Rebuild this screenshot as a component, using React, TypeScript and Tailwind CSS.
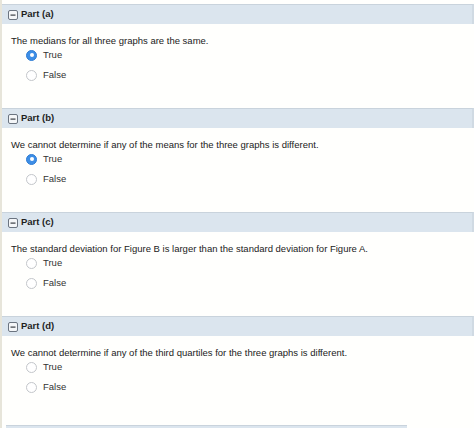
import React from 'react';

// Quiz parts, each with a true/false choice
const parts = [
  { label: 'Part (a)', question: 'The medians for all three graphs are the same.', answer: 'True' },
  { label: 'Part (b)', question: 'We cannot determine if any of the means for the three graphs is different.', answer: 'True' },
  { label: 'Part (c)', question: 'The standard deviation for Figure B is larger than the standard deviation for Figure A.', answer: '' },
  { label: 'Part (d)', question: 'We cannot determine if any of the third quartiles for the three graphs is different.', answer: '' },
];

const CollapseIcon = () => (
  <svg width="10" height="10" viewBox="0 0 10 10" className="shrink-0">
    <rect x="0.5" y="0.5" width="9" height="9" rx="1.5" fill="#f4f6f8" stroke="#6b7480" />
    <rect x="2.5" y="4.5" width="5" height="1.2" fill="#3a3f45" />
  </svg>
);

const Radio = ({ checked }: { checked: boolean }) =>
  checked ? (
    <span className="w-[11px] h-[11px] rounded-full bg-[#3d8ee6] border border-[#2f7dd4] flex items-center justify-center shrink-0">
      <span className="w-[4px] h-[4px] rounded-full bg-white" />
    </span>
  ) : (
    <span className="w-[11px] h-[11px] rounded-full bg-white border border-[#c3c6ca] shrink-0" />
  );

const Part = ({ label, question, answer }: { label: string; question: string; answer: string }) => (
  <section className="h-[104px] shrink-0 flex flex-col">
    <div className="h-[20px] shrink-0 flex items-center gap-[3px] pl-[6px] bg-[#dbe5ee] border-t border-[#c9d3dc] border-r-2 border-r-[#d0dae3]">
      <CollapseIcon />
      <span className="font-bold text-[9.5px] text-[#1e1e1e]">{label}</span>
    </div>
    <div className="flex flex-col pt-[10px] pl-[9px]">
      <p className="h-[13px] leading-[14px] text-[9.5px] text-[#222]">{question}</p>
      <div className="flex flex-col gap-[4px] pl-[15px]">
        {['True', 'False'].map((opt) => (
          <label key={opt} className="h-[16px] flex items-center gap-[6px] text-[9.5px] text-[#333]">
            <Radio checked={answer === opt} />
            {opt}
          </label>
        ))}
      </div>
    </div>
  </section>
);

export default function App() {
  return (
    <div className="w-[474px] h-[428px] overflow-hidden bg-[#fffffd] flex font-['Liberation_Sans',Arial,sans-serif]">
      <div className="w-[2px] bg-[#e7e5da] shrink-0" />
      <div className="flex-1 pt-[4px] flex flex-col">
        {parts.map((p) => (
          <Part key={p.label} {...p} />
        ))}
        <div className="h-[20px] shrink-0 mt-[5px] bg-[#dbe5ee] border-t border-[#c9d3dc] mr-[67px] ml-[4px]" />
      </div>
    </div>
  );
}
